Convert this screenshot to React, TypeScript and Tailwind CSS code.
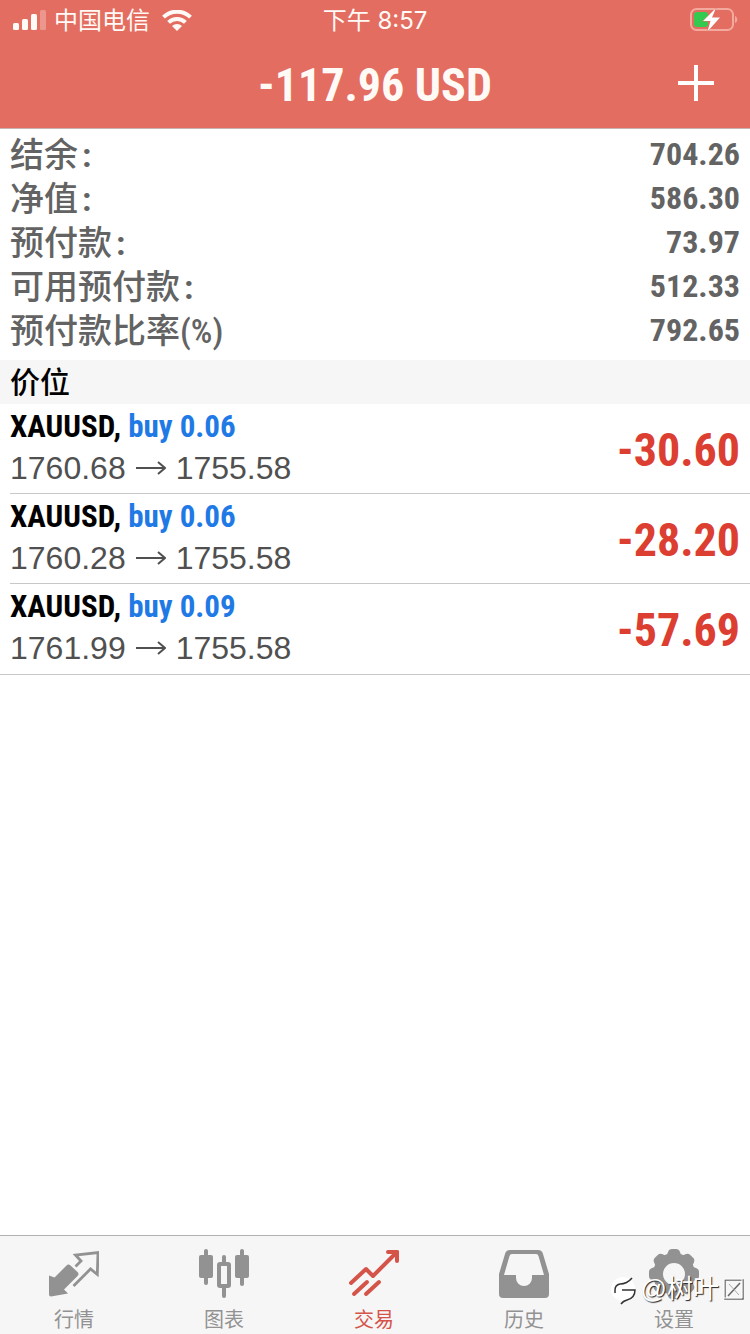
import type { ReactNode } from "react";

const narrow = "font-['Roboto_Condensed','Noto_Sans_CJK_SC',sans-serif]";

const summary = [
  { label: "结余", colon: true, value: "704.26" },
  { label: "净值", colon: true, value: "586.30" },
  { label: "预付款", colon: true, value: "73.97" },
  { label: "可用预付款", colon: true, value: "512.33" },
  { label: "预付款比率(%)", colon: false, value: "792.65" },
];

const positions = [
  { id: 1, symbol: "XAUUSD", side: "buy 0.06", open: "1760.68", now: "1755.58", profit: "-30.60" },
  { id: 2, symbol: "XAUUSD", side: "buy 0.06", open: "1760.28", now: "1755.58", profit: "-28.20" },
  { id: 3, symbol: "XAUUSD", side: "buy 0.09", open: "1761.99", now: "1755.58", profit: "-57.69" },
];

function SignalIcon() {
  return (
    <svg width="34" height="22" viewBox="0 0 34 22" fill="#fffaf5" aria-hidden="true">
      <rect x="1" y="13" width="6" height="7" rx="1.5" />
      <rect x="10" y="9" width="6" height="11" rx="1.5" />
      <rect x="19" y="4" width="6" height="16" rx="1.5" />
      <rect x="28" y="0" width="6" height="20" rx="1.5" opacity="0.3" />
    </svg>
  );
}

function WifiIcon() {
  return (
    <svg width="30" height="22" viewBox="0 0 30 22" aria-hidden="true">
      <g fill="none" stroke="#fffaf5" strokeWidth="4">
        <path d="M1.5 7.200a19.2 19.2 0 0 1 27 0" />
        <path d="M6.6 12.400a12 12 0 0 1 16.8 0" />
      </g>
      <path d="M10 16a7.2 7.2 0 0 1 10 0l-5 5z" fill="#fffaf5" />
    </svg>
  );
}

function BatteryIcon() {
  return (
    <svg width="48" height="26" viewBox="0 0 48 26" aria-hidden="true">
      <rect x="1" y="2" width="42" height="21" rx="5.5" fill="none" stroke="#f3a99d" strokeWidth="2" />
      <path d="M45 9v7c3-1 3-6 0-7z" fill="#f3a99d" />
      <rect x="4" y="5" width="14" height="15" rx="3" fill="#34c94f" />
      <path d="M26 1 13 14h7.500l-3 10.500L30 10.500h-8z" fill="#fff" stroke="#e46d62" strokeWidth="1" strokeLinejoin="round" paintOrder="stroke" />
    </svg>
  );
}

function QuotesIcon() {
  return (
    <svg width="50" height="50" viewBox="0 0 50 50" aria-hidden="true">
      <path d="M0 26.500 5.500 28.500 17.500 16.500q2-2 4 0l7 6.500q2 2 0 4L15 40.500l4 4L2 47.500q-2 0-2-2z" fill="#929292" />
      <path d="M26.500 17.500 32 12 26.500 6 49 3.500l-.700 22-6.800-5.500L24.500 37" fill="none" stroke="#929292" strokeWidth="2.800" />
    </svg>
  );
}

function ChartIcon() {
  return (
    <svg width="50" height="50" viewBox="0 0 50 50" aria-hidden="true">
      <g fill="#929292">
        <rect x="5" y="0" width="4" height="36" rx="2" />
        <rect x="0" y="6" width="14" height="23" rx="2" />
        <rect x="41" y="0" width="4" height="37" rx="2" />
        <rect x="36" y="6" width="14" height="23" rx="2" />
        <rect x="23" y="6" width="4" height="9" rx="2" />
        <rect x="23" y="37" width="4" height="12" rx="2" />
      </g>
      <rect x="20" y="15" width="10" height="22" rx="1" fill="none" stroke="#929292" strokeWidth="4" />
    </svg>
  );
}

function TradeIcon() {
  return (
    <svg width="50" height="50" viewBox="0 0 50 50" aria-hidden="true">
      <g fill="none" stroke="#d5544a" strokeWidth="4" strokeLinecap="round" strokeLinejoin="round">
        <path d="M2 34 17 20l7 7L48 3" />
        <path d="M39 3h9v9" />
        <path d="M5 45 18 33M17 45 30 33" />
      </g>
    </svg>
  );
}

function HistoryIcon() {
  return (
    <svg width="50" height="50" viewBox="0 0 50 50" aria-hidden="true">
      <path
        fillRule="evenodd"
        fill="#929292"
        d="M11 1h28q4 0 5 4l6 20v20q0 4-4 4H4q-4 0-4-4V25L6 5q1-4 5-4zM13 5q-2 0-2.500 2L5 26h12v3a8 8 0 0 0 16 0v-3h12L39.500 7Q39 5 37 5z"
      />
    </svg>
  );
}

function SettingsIcon() {
  const teeth = [0, 45, 90, 135, 180, 225, 270, 315];
  return (
    <svg width="50" height="50" viewBox="0 0 50 50" aria-hidden="true">
      <g fill="#929292">
        {teeth.map((a) => (
          <path key={a} d="M16.500 10 19 3q1-3 4-3h4q3 0 4 3l2.500 7z" transform={`rotate(${a} 25 25)`} />
        ))}
      </g>
      <circle cx="25" cy="25" r="16" fill="none" stroke="#929292" strokeWidth="10" />
    </svg>
  );
}

function Watermark() {
  return (
    <div className="pointer-events-none absolute right-[6px] bottom-[29px] flex items-center gap-1 text-[26px] leading-8 text-white [text-shadow:1px_1px_1px_#222]">
      <svg width="26" height="32" viewBox="0 0 26 32" aria-hidden="true">
        <circle cx="12" cy="16" r="12" fill="#fff" />
        <path d="M4 17q0-5 5-6 7 0 12-6M11 17h13q0 8-8 10-4 1-6 4M4 17v3" fill="none" stroke="#333" strokeWidth="1.500" />
      </svg>
      <span>@树叶</span>
      <svg width="21" height="22" viewBox="0 0 21 22" fill="none" aria-hidden="true">
        <path d="M2 2h18v19H2zM17 5 5 18" stroke="#666" strokeWidth="1.500" />
        <path d="M6 6l10 11" stroke="#aaa" />
        <path d="M1 1h18v19H1z" stroke="#fff" />
      </svg>
    </div>
  );
}

const tabs: { label: string; icon: ReactNode; active: boolean }[] = [
  { label: "行情", icon: <QuotesIcon />, active: false },
  { label: "图表", icon: <ChartIcon />, active: false },
  { label: "交易", icon: <TradeIcon />, active: true },
  { label: "历史", icon: <HistoryIcon />, active: false },
  { label: "设置", icon: <SettingsIcon />, active: false },
];

export default function App() {
  return (
    <div className="flex min-h-screen flex-col bg-white font-['Liberation_Sans','Noto_Sans_CJK_SC',sans-serif]">
      <header className="border-b border-[#c9b3b0] bg-[#e46d62] text-[#fffaf5]">
        <div className="grid h-[42px] grid-cols-3 items-center px-3 text-2xl">
          <div className="flex items-center gap-2">
            <SignalIcon />
            <span>中国电信</span>
            <span className="pl-1">
              <WifiIcon />
            </span>
          </div>
          <div className="text-center font-['Inter','Noto_Sans_CJK_SC',sans-serif]">下午 8:57</div>
          <div className="flex justify-end pb-[2px]">
            <BatteryIcon />
          </div>
        </div>
        <div className="grid h-[86px] grid-cols-[1fr_auto_1fr] items-center px-9">
          <h1 className={`col-start-2 text-[46px] font-bold ${narrow}`}>-117.96 USD</h1>
          <button type="button" aria-label="新订单" className="justify-self-end pb-1">
            <svg width="36" height="36" viewBox="0 0 36 36" stroke="#fff" strokeWidth="4" aria-hidden="true">
              <path d="M18 0v36M0 18h36" />
            </svg>
          </button>
        </div>
      </header>

      <main className="flex-1">
        <dl className={`px-[10px] pt-1 pb-[7px] text-[34px] font-bold text-[#636363] ${narrow}`}>
          {summary.map((row) => (
            <div key={row.label} className="flex h-11 items-center justify-between">
              <dt className="font-medium">
                {row.label}
                {row.colon && <span className="ml-1 font-bold">:</span>}
              </dt>
              <dd className="pb-[2px] text-[32px]">{row.value}</dd>
            </div>
          ))}
        </dl>

        <h2 className="flex h-11 items-center bg-[#f6f6f6] px-[10px] text-[30px] font-medium text-black">价位</h2>

        <ul className="border-b border-[#c8c8c8]">
          {positions.map((p) => (
            <li key={p.id} className="ml-[10px] flex h-[90px] items-center justify-between border-b border-[#c8c8c8] pr-[10px] last:border-transparent">
              <div className="pb-px">
                <p className={`text-[31px] leading-10 font-bold text-black ${narrow}`}>
                  {p.symbol}, <span className="text-[#1f7ae6]">{p.side}</span>
                </p>
                <p className="flex items-center gap-[10px] text-[32px] leading-[42px] text-[#505050]">
                  {p.open}
                  <svg width="30" height="14" viewBox="0 0 30 14" fill="none" stroke="#505050" strokeWidth="2" aria-hidden="true">
                    <path d="M0 7h29M22 1l7 6-7 6" />
                  </svg>
                  {p.now}
                </p>
              </div>
              <span className={`pt-1 text-[46px] font-bold text-[#dc3e31] ${narrow}`}>{p.profit}</span>
            </li>
          ))}
        </ul>
      </main>

      <nav className="relative border-t border-[#b2b2b2] bg-[#f6f6f6]">
        <div className="grid h-[98px] grid-cols-5">
          {tabs.map((tab) => (
            <a
              key={tab.label}
              href="#"
              className={`flex flex-col items-center pt-[13px] pr-[2px] text-xl leading-[42px] ${tab.active ? "text-[#d5544a]" : "text-[#929292]"}`}
            >
              {tab.icon}
              <span>{tab.label}</span>
            </a>
          ))}
        </div>
        <Watermark />
      </nav>
    </div>
  );
}
